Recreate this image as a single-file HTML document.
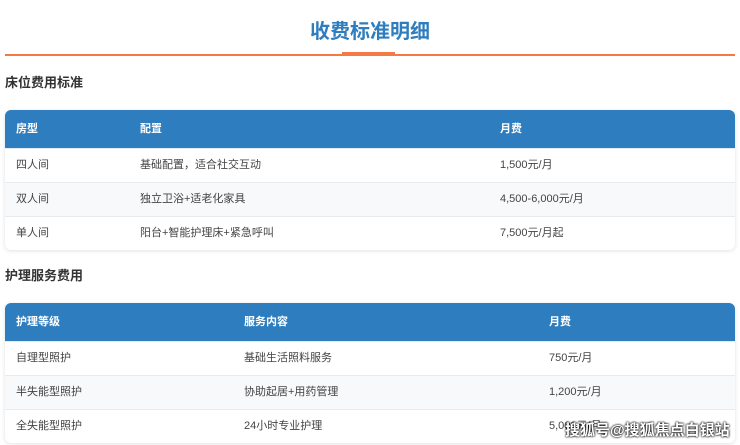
<!DOCTYPE html>
<html><head><meta charset="utf-8"><style>
body{margin:0;background:#fff;width:740px;height:445px;overflow:hidden;font-family:"Liberation Sans","Noto Sans CJK SC",sans-serif;position:relative}
.t{position:absolute;left:0;width:740px;top:18px;text-align:center;font-size:20px;font-weight:bold;color:#2d7dbf;line-height:28px}
.ln{position:absolute;left:5px;width:730px;top:54px;height:2px;background:#f47a45}
.ln2{position:absolute;left:342px;width:53px;top:52px;height:2px;background:#f47a45}
h3{position:absolute;left:5px;margin:0;font-size:13px;font-weight:bold;color:#333;line-height:18px}
.tb{position:absolute;left:5px;width:730px;border-radius:6px;overflow:hidden;box-shadow:0 1px 4px rgba(0,0,0,.12);background:#fff}
.r{position:relative;height:33px;border-top:1px solid #e6ebf0;font-size:11px;color:#444}
.r.h{height:38px;background:#2d7dbf;color:#fff;font-weight:bold;border:0}
.r.a{background:#f7f9fb}
.r span{position:absolute;top:0;line-height:33px}
.r.h span{line-height:38px}
.wm{position:absolute;left:565px;top:419px;font-size:15px;font-weight:bold;color:#fff;text-shadow:0 0 2px #000,0 0 2px #000}
</style></head><body>
<div class="t">收费标准明细</div>
<div class="ln"></div><div class="ln2"></div>
<h3 style="top:74px">床位费用标准</h3>
<div class="tb" style="top:110px">
<div class="r h"><span style="left:11px">房型</span><span style="left:135px">配置</span><span style="left:495px">月费</span></div>
<div class="r"><span style="left:11px">四人间</span><span style="left:135px">基础配置，适合社交互动</span><span style="left:495px">1,500元/月</span></div>
<div class="r a"><span style="left:11px">双人间</span><span style="left:135px">独立卫浴+适老化家具</span><span style="left:495px">4,500-6,000元/月</span></div>
<div class="r"><span style="left:11px">单人间</span><span style="left:135px">阳台+智能护理床+紧急呼叫</span><span style="left:495px">7,500元/月起</span></div>
</div>
<h3 style="top:267px">护理服务费用</h3>
<div class="tb" style="top:303px">
<div class="r h"><span style="left:11px">护理等级</span><span style="left:239px">服务内容</span><span style="left:544px">月费</span></div>
<div class="r"><span style="left:11px">自理型照护</span><span style="left:239px">基础生活照料服务</span><span style="left:544px">750元/月</span></div>
<div class="r a"><span style="left:11px">半失能型照护</span><span style="left:239px">协助起居+用药管理</span><span style="left:544px">1,200元/月</span></div>
<div class="r"><span style="left:11px">全失能型照护</span><span style="left:239px">24小时专业护理</span><span style="left:544px">5,000元/月</span></div>
</div>
<div class="wm">搜狐号@搜狐焦点白银站</div>
</body></html>
